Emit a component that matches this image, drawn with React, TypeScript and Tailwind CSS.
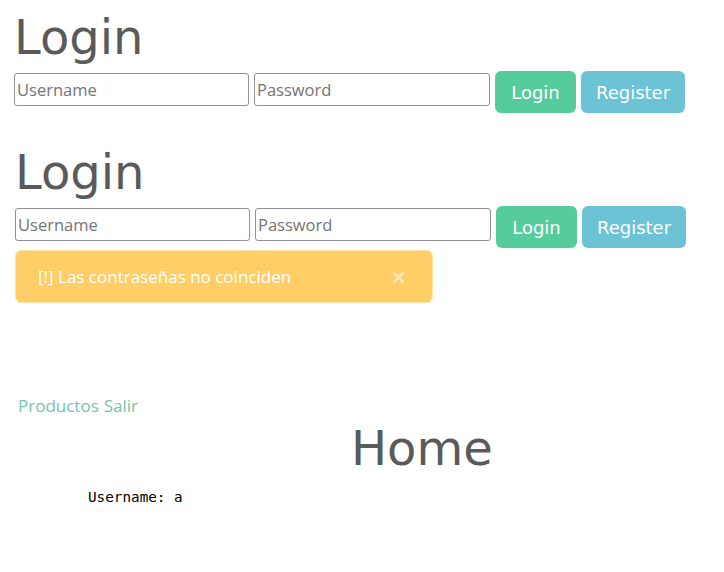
import React from 'react';

const LoginForm = ({ offset }: { offset: string }) => (
    <div className={offset}>
        <h1 className="font-['DejaVu_Sans',sans-serif] text-[48px] leading-[56px] text-[#5a5a5a]">Login</h1>
        <div className="flex items-start gap-[5px] mt-[6px]">
            <input
                placeholder="Username"
                className="mt-[2px] w-[235px] h-[33px] px-[2px] border border-[#8f8f9d] rounded-[3px] font-['Open_Sans',sans-serif] text-[16.5px] placeholder:text-[#757575] outline-none"
            />
            <input
                type="password"
                placeholder="Password"
                className="mt-[2px] w-[236px] h-[33px] px-[2px] border border-[#8f8f9d] rounded-[3px] font-['Open_Sans',sans-serif] text-[16.5px] placeholder:text-[#757575] outline-none"
            />
            <button className="w-[81px] h-[42px] rounded-[6px] bg-[#56cc9d] text-white font-['DejaVu_Sans',sans-serif] text-[18px]">
                Login
            </button>
            <button className="w-[104px] h-[42px] rounded-[6px] bg-[#6cc3d5] text-white font-['DejaVu_Sans',sans-serif] text-[18px]">
                Register
            </button>
        </div>
    </div>
);

export default function App() {
    return (
        <div className="w-[724px] h-[572px] bg-white overflow-hidden">
            <div className="pt-[9px]">
                <LoginForm offset="pl-[14px]" />
            </div>

            <div className="mt-[31px]">
                <LoginForm offset="pl-[15px]" />
                <div className="ml-[15px] mt-[2px] w-[418px] h-[53px] flex items-center justify-between pl-[22px] pr-[26px] bg-[#ffce67] border border-[#ffe3a6] rounded-[6px] text-white font-['Open_Sans',sans-serif] text-[17px]">
                    <span>[!] Las contraseñas no coinciden</span>
                    <span className="text-[26px] font-bold leading-none opacity-50">×</span>
                </div>
            </div>

            <nav className="mt-[91px] pl-[18px] flex gap-[5px] font-['Open_Sans',sans-serif] text-[17px] leading-[24px] text-[#78c2ad]">
                <a>Productos</a>
                <a>Salir</a>
            </nav>

            <h1 className="mt-[2px] pl-[351px] font-['DejaVu_Sans',sans-serif] text-[48px] leading-[56px] text-[#5a5a5a]">Home</h1>

            <pre className="mt-[11px] pl-[88px] font-['DejaVu_Sans_Mono',monospace] text-[14.3px] leading-[20px] text-black">Username: a</pre>
        </div>
    );
}
